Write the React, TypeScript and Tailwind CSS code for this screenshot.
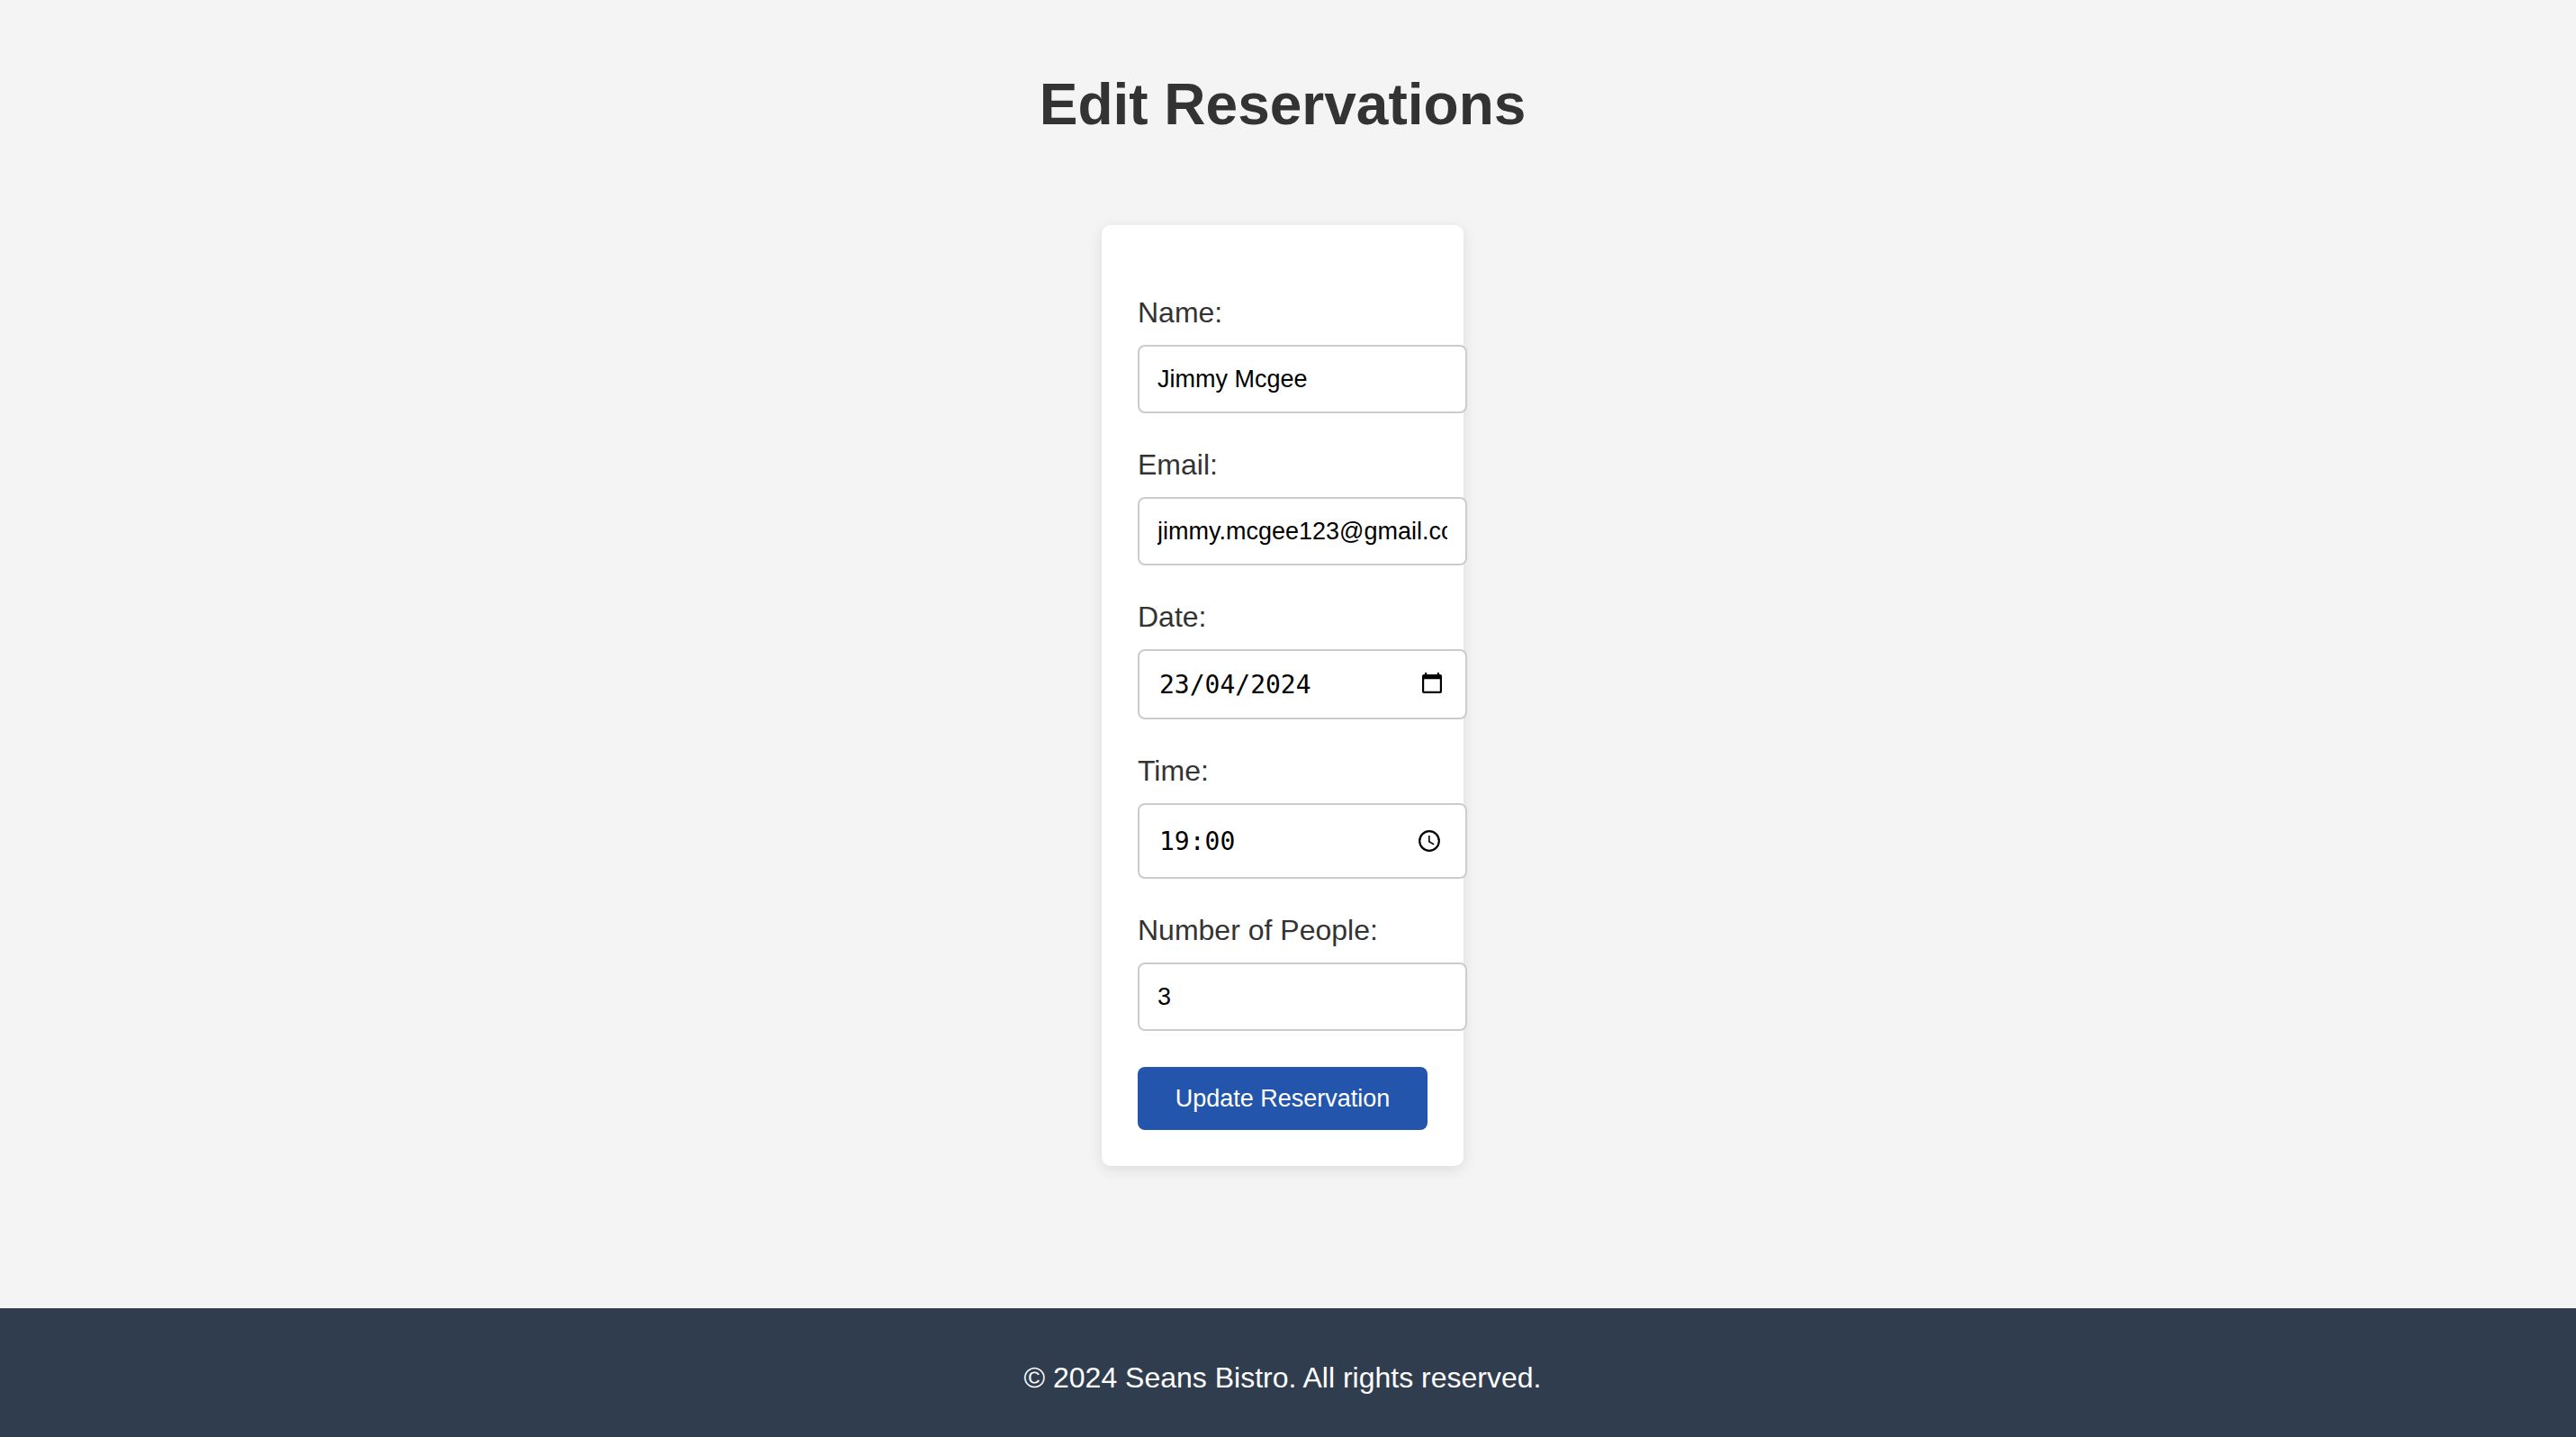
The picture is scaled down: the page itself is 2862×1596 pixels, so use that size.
import { useState, type InputHTMLAttributes, type ReactNode } from 'react';

type FieldProps = InputHTMLAttributes<HTMLInputElement> & {
  id: string;
  label: string;
  sizing: string;
  icon?: ReactNode;
};

function Field({ id, label, sizing, icon, defaultValue, ...rest }: FieldProps) {
  const [value, setValue] = useState(String(defaultValue ?? ''));
  return (
    <div className="flex flex-col gap-[19px]">
      <label htmlFor={id} className="text-[32px] leading-[34px] text-[#333333]">
        {label}
      </label>
      <div className="relative w-[366px]">
        <input
          id={id}
          name={id}
          value={value}
          onChange={(e) => setValue(e.target.value)}
          className={`block w-full rounded-lg border-2 border-[#cccccc] bg-white text-black ${sizing}`}
          {...rest}
        />
        {icon}
      </div>
    </div>
  );
}

function CalendarButton() {
  return (
    <button type="button" aria-label="Show date picker" className="absolute top-[26px] right-7">
      <svg width="22" height="24" viewBox="0 0 22 24" className="block">
        <path
          fillRule="evenodd"
          d="M3 0h2.200v2h11.600V0H19v2h1a2 2 0 0 1 2 2v17a2 2 0 0 1-2 2H2a2 2 0 0 1-2-2V4a2 2 0 0 1 2-2h1zM2.200 7.300V20.800h17.600V7.300z"
        />
      </svg>
    </button>
  );
}

function ClockButton() {
  return (
    <button type="button" aria-label="Show time picker" className="absolute top-[30px] right-[30px]">
      <svg width="24" height="24" viewBox="0 0 24 24" fill="none" stroke="black" className="block">
        <circle cx="12" cy="12" r="10.800" strokeWidth="2.200" />
        <path d="M11.800 6v6.700l5.400 3.200" strokeWidth="1.600" />
      </svg>
    </button>
  );
}

export default function App() {
  return (
    <div className="flex min-h-screen flex-col bg-[#f4f4f4] font-['Liberation_Sans',Arial,sans-serif]">
      <main className="flex flex-1 flex-col items-center pt-[79px] pr-3 pb-20">
        <h1 className="text-[64px] leading-[74px] font-bold text-[#333333]">Edit Reservations</h1>
        <form
          onSubmit={(e) => e.preventDefault()}
          className="mt-[97px] flex w-[402px] flex-col gap-10 rounded-[10px] bg-white px-10 pt-20 pb-10 shadow-[0_4px_16px_rgba(0,0,0,0.1)]"
        >
          <Field id="name" label="Name:" type="text" defaultValue="Jimmy Mcgee" sizing="h-[76px] px-5 text-[27px]" />
          <Field
            id="email"
            label="Email:"
            type="email"
            defaultValue="jimmy.mcgee123@gmail.com"
            sizing="h-[76px] px-5 text-[27px]"
          />
          <Field
            id="date"
            label="Date:"
            type="text"
            inputMode="numeric"
            defaultValue="23/04/2024"
            sizing="h-[78px] px-[22px] text-[28px] font-['DejaVu_Sans_Mono',monospace]"
            icon={<CalendarButton />}
          />
          <Field
            id="time"
            label="Time:"
            type="text"
            inputMode="numeric"
            defaultValue="19:00"
            sizing="h-[84px] px-[22px] text-[28px] font-['DejaVu_Sans_Mono',monospace]"
            icon={<ClockButton />}
          />
          <Field
            id="people"
            label="Number of People:"
            type="number"
            defaultValue="3"
            sizing="h-[76px] px-5 text-[27px]"
          />
          <button type="submit" className="h-[70px] rounded-lg bg-[#2355ac] text-[27px] text-white">
            Update Reservation
          </button>
        </form>
      </main>
      <footer className="bg-[#303d4e] pt-[59px] pr-3 pb-[47px] text-center text-[32px] leading-[37px] text-white">
        <p>© 2024 Seans Bistro. All rights reserved.</p>
      </footer>
    </div>
  );
}
